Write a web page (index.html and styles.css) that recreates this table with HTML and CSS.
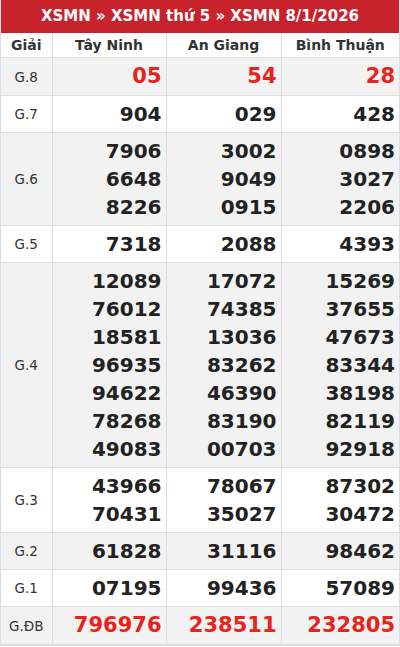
FILE: index.html
```html
<!DOCTYPE html>
<html lang="vi">
<head>
<meta charset="utf-8">
<title>XSMN 8/1/2026</title>
<link rel="stylesheet" href="styles.css">
</head>
<body>
<div class="box">
  <div class="title">XSMN » XSMN thứ 5 » XSMN 8/1/2026</div>
  <table class="kq">
    <colgroup>
      <col class="c-lbl"><col class="c-p1"><col class="c-p2"><col class="c-p3">
    </colgroup>
    <thead>
      <tr><th>Giải</th><th>Tây Ninh</th><th>An Giang</th><th>Bình Thuận</th></tr>
    </thead>
    <tbody>
      <tr class="alt"><td class="lbl">G.8</td><td class="num red">05</td><td class="num red">54</td><td class="num red">28</td></tr>
      <tr><td class="lbl">G.7</td><td class="num">904</td><td class="num">029</td><td class="num">428</td></tr>
      <tr class="alt"><td class="lbl">G.6</td><td class="num">7906<br>6648<br>8226</td><td class="num">3002<br>9049<br>0915</td><td class="num">0898<br>3027<br>2206</td></tr>
      <tr><td class="lbl">G.5</td><td class="num">7318</td><td class="num">2088</td><td class="num">4393</td></tr>
      <tr class="alt"><td class="lbl">G.4</td><td class="num">12089<br>76012<br>18581<br>96935<br>94622<br>78268<br>49083</td><td class="num">17072<br>74385<br>13036<br>83262<br>46390<br>83190<br>00703</td><td class="num">15269<br>37655<br>47673<br>83344<br>38198<br>82119<br>92918</td></tr>
      <tr><td class="lbl">G.3</td><td class="num">43966<br>70431</td><td class="num">78067<br>35027</td><td class="num">87302<br>30472</td></tr>
      <tr class="alt"><td class="lbl">G.2</td><td class="num">61828</td><td class="num">31116</td><td class="num">98462</td></tr>
      <tr><td class="lbl">G.1</td><td class="num">07195</td><td class="num">99436</td><td class="num">57089</td></tr>
      <tr class="alt"><td class="lbl">G.ĐB</td><td class="num red">796976</td><td class="num red">238511</td><td class="num red">232805</td></tr>
    </tbody>
  </table>
</div>
</body>
</html>
```
FILE: styles.css
```css
html, body {
  margin: 0;
  padding: 0;
  background: #fff;
}
body {
  font-family: "DejaVu Sans", sans-serif;
  color: #222;
}
.box {
  width: 400px;
  box-sizing: border-box;
  border: 1px solid #dcdce6;
  border-top: 0;
  border-bottom-width: 2px;
}
.title {
  background: #c8232c;
  color: #fff;
  font-weight: bold;
  font-size: 15px;
  line-height: 33px;
  height: 33px;
  text-align: center;
}
.kq {
  width: 100%;
  border-collapse: collapse;
  table-layout: fixed;
}
.c-lbl { width: 51px; }
.c-p1 { width: 114px; }
.c-p2 { width: 115px; }
.kq th {
  font-size: 14px;
  font-weight: bold;
  color: #333;
  line-height: 16px;
  padding: 4px 0;
  border: 1px solid #ddd;
  border-top: 0;
  text-align: center;
}
.kq td {
  border: 1px solid #ddd;
  padding: 4px 4px 4px 0;
  vertical-align: middle;
}
.kq tr > :first-child { border-left: 0; }
.kq tr > :last-child { border-right: 0; }
.kq tbody tr:last-child td { border-bottom: 0; }
.alt td { background: #f2f2f3; }
.kq td.lbl {
  font-size: 13.5px;
  text-align: center;
  color: #333;
  padding: 0;
}
.num {
  text-align: right;
  font-size: 20px;
  font-weight: bold;
  line-height: 28px;
  color: #222;
}
.num.red {
  color: #e8231a;
  font-size: 21px;
  line-height: 29px;
}
```
